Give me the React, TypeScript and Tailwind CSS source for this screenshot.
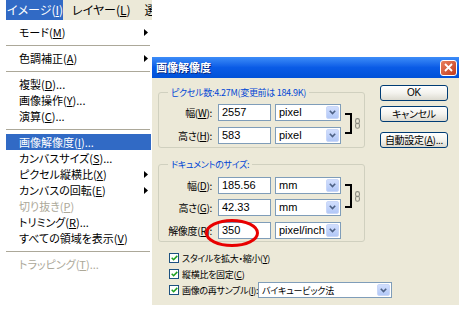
import React from "react";

const JP = "font-['Noto_Sans_CJK_JP',sans-serif] [font-feature-settings:'palt']";
const LAT = "font-['Liberation_Sans','Noto_Sans_CJK_JP',sans-serif]";

function U({ c }: { c: string }) {
  return <span className="underline underline-offset-[1px]">{c}</span>;
}

type Item =
  | { sep: true }
  | { sep?: false; pre: string; key: string; post?: string; arrow?: boolean; disabled?: boolean; hl?: boolean };

const items: Item[] = [
  { pre: "モード", key: "M", arrow: true },
  { sep: true },
  { pre: "色調補正", key: "A", arrow: true },
  { sep: true },
  { pre: "複製", key: "D", post: "..." },
  { pre: "画像操作", key: "Y", post: "..." },
  { pre: "演算", key: "C", post: "..." },
  { sep: true },
  { pre: "画像解像度", key: "I", post: "...", hl: true },
  { pre: "カンバスサイズ", key: "S", post: "..." },
  { pre: "ピクセル縦横比", key: "X", arrow: true },
  { pre: "カンバスの回転", key: "E", arrow: true },
  { pre: "切り抜き", key: "P", disabled: true },
  { pre: "トリミング", key: "R", post: "..." },
  { pre: "すべての領域を表示", key: "V" },
  { sep: true },
  { pre: "トラッピング", key: "T", post: "...", disabled: true },
];

function Arrow() {
  return (
    <svg width="4" height="7" viewBox="0 0 4 7" className="shrink-0">
      <path d="M0 0 L4 3.5 L0 7 Z" fill="#000" />
    </svg>
  );
}

function Menu() {
  return (
    <div className={`w-[152px] shrink-0 flex flex-col ${JP} text-[11px] leading-none`}>
      <div className="h-[20px] flex text-[12px]">
        <div className="w-[6px] bg-white" />
        <div className="flex-1 bg-[#ECE9D8] flex items-center overflow-hidden whitespace-nowrap">
          <div className="h-full w-[57px] bg-[#316AC5] text-white flex items-center pl-[1px]">
            イメージ(<U c="I" />)
          </div>
          <div className="ml-[9px]">
            レイヤー(<U c="L" />)
          </div>
          <div className="ml-[14px]">選択</div>
        </div>
      </div>
      <div className="flex-1 bg-white pt-[4px] flex flex-col">
        {items.map((it, i) =>
          it.sep ? (
            <div key={i} className="h-[10px] ml-[6px] w-[144px] flex items-center">
              <div className="h-px w-full bg-[#ACA899]" />
            </div>
          ) : (
            <div
              key={i}
              className={`h-[16px] ml-[6px] w-[145px] pl-[13px] pr-[3px] flex items-center whitespace-nowrap ${
                it.hl ? "bg-[#316AC5] text-white" : it.disabled ? "text-[#ACA899]" : "text-black"
              }`}
            >
              <span className="flex-1">
                {it.pre}(<U c={it.key} />){it.post ?? ""}
              </span>
              {it.arrow && <Arrow />}
            </div>
          )
        )}
      </div>
    </div>
  );
}

function Chevron() {
  return (
    <svg width="7" height="5" viewBox="0 0 7 5">
      <path d="M0.8 0.8 L3.5 3.6 L6.2 0.8" fill="none" stroke="#4D6185" strokeWidth="1.6" />
    </svg>
  );
}

function Select({ text, w, h = 17, jp }: { text: string; w: number; h?: number; jp?: boolean }) {
  return (
    <div
      className={`border border-[#7F9DB9] bg-white flex items-stretch ${jp ? `${JP} text-[9px] tracking-[-0.2px]` : `${LAT} text-[11px]`}`}
      style={{ width: w, height: h }}
    >
      <div className="flex-1 pl-[3px] flex items-center overflow-hidden whitespace-nowrap">{text}</div>
      <div className="w-[13px] m-px rounded-[2px] bg-gradient-to-b from-[#D1DEFD] to-[#B2C8F7] border border-[#C9D7F8] flex items-center justify-center">
        <Chevron />
      </div>
    </div>
  );
}

function Input({ text }: { text: string }) {
  return (
    <div className={`w-[53px] h-[17px] border border-[#7F9DB9] bg-white pl-[3px] flex items-center ${LAT} text-[11px]`}>
      {text}
    </div>
  );
}

function Row({ label, k, value, unit, ellipse }: { label: string; k: string; value: string; unit: string; ellipse?: boolean }) {
  return (
    <div className="flex items-center h-[17px]">
      <div className="w-[53px] text-right text-[10px] tracking-[-0.3px] whitespace-nowrap">
        {label}(<U c={k} />):
      </div>
      <div className="ml-[6px] relative">
        <Input text={value} />
        {ellipse && (
          <svg className="absolute left-[-14px] top-[-4px]" width="56" height="30" viewBox="0 0 56 30">
            <ellipse cx="28" cy="15" rx="25.5" ry="12.5" fill="none" stroke="#E80000" strokeWidth="3" />
          </svg>
        )}
      </div>
      <div className="ml-[4px]">
        <Select text={unit} w={66} />
      </div>
    </div>
  );
}

function Chain() {
  return (
    <svg width="5" height="11" viewBox="0 0 5 11">
      <rect x="0.6" y="0.6" width="3.8" height="5" rx="1.8" fill="none" stroke="#8A8A80" strokeWidth="1.1" />
      <rect x="0.6" y="5.2" width="3.8" height="5" rx="1.8" fill="none" stroke="#8A8A80" strokeWidth="1.1" />
    </svg>
  );
}

function Bracket({ h }: { h: number }) {
  return (
    <div className="flex items-center ml-[4px]">
      <div className="w-[7px] border-t-2 border-r-2 border-b-2 border-black" style={{ height: h }} />
      <div className="ml-[3px]">
        <Chain />
      </div>
    </div>
  );
}

function Group({ legend, children, h, top }: { legend: string; children: React.ReactNode; h: number; top: string }) {
  return (
    <div className={`relative w-[207px] border border-[#D0D0BF] rounded-[3px] ${top}`} style={{ height: h }}>
      <div className="absolute -top-[7px] left-[9px] px-[3px] bg-[#ECE9D8] text-[#0046D5] text-[9px] tracking-[-0.3px] leading-[13px] whitespace-nowrap">
        {legend}
      </div>
      {children}
    </div>
  );
}

function Check() {
  return (
    <div className="w-[10px] h-[10px] border border-[#1C5180] bg-white flex items-center justify-center shrink-0">
      <svg width="7" height="6" viewBox="0 0 7 6">
        <path d="M0.7 2.8 L2.6 4.7 L6.3 0.9" fill="none" stroke="#21A121" strokeWidth="1.6" />
      </svg>
    </div>
  );
}

function Button({ children, mt }: { children: React.ReactNode; mt: string }) {
  return (
    <div
      className={`w-[68px] h-[16px] ${mt} rounded-[3px] border border-[#003C74] bg-gradient-to-b from-white via-[#F4F3EE] to-[#DCDAD0] flex items-center justify-center text-[10px] tracking-[-0.3px] leading-none whitespace-nowrap`}
    >
      {children}
    </div>
  );
}

function Dialog() {
  return (
    <div className={`w-[307px] shrink-0 mt-[57px] h-[248px] flex flex-col ${JP} leading-none text-black`}>
      <div className="h-[21px] bg-gradient-to-b from-[#3C8CF8] via-[#0A5BE6] to-[#0051D8] flex items-center pl-[4px] pr-[2px]">
        <div className="flex-1 text-white font-bold text-[11px] [text-shadow:1px_1px_0_#0A2A80]">画像解像度</div>
        <div className="w-[17px] h-[16px] rounded-[3px] border border-white bg-gradient-to-br from-[#E9805D] to-[#C2381A] flex items-center justify-center">
          <svg width="9" height="9" viewBox="0 0 9 9">
            <path d="M1 1 L8 8 M8 1 L1 8" stroke="#fff" strokeWidth="1.8" />
          </svg>
        </div>
      </div>
      <div className="flex-1 bg-[#ECE9D8] flex">
        <div className="ml-[6px] w-[207px] shrink-0 flex flex-col">
          <Group legend="ピクセル数:4.27M(変更前は 184.9K)" h={56} top="mt-[14px]">
            <div className="pt-[11px] flex">
              <div className="flex flex-col gap-[6px]">
                <Row label="幅" k="W" value="2557" unit="pixel" />
                <Row label="高さ" k="H" value="583" unit="pixel" />
              </div>
              <div className="mt-[9px]">
                <Bracket h={21} />
              </div>
            </div>
          </Group>
          <Group legend="ドキュメントのサイズ:" h={78} top="mt-[16px]">
            <div className="pt-[12px] flex flex-col">
              <div className="flex">
                <div className="flex flex-col gap-[5px]">
                  <Row label="幅" k="D" value="185.56" unit="mm" />
                  <Row label="高さ" k="G" value="42.33" unit="mm" />
                </div>
                <div className="mt-[7px]">
                  <Bracket h={24} />
                </div>
              </div>
              <div className="mt-[6px]">
                <Row label="解像度" k="R" value="350" unit="pixel/inch" ellipse />
              </div>
            </div>
          </Group>
          <div className="mt-[8px] pl-[11px] flex flex-col text-[9px] tracking-[-0.3px]">
            <div className="h-[16px] flex items-center gap-[3px] whitespace-nowrap">
              <Check />
              <span>
                スタイルを拡大・縮小(<U c="Y" />)
              </span>
            </div>
            <div className="h-[16px] flex items-center gap-[3px] whitespace-nowrap">
              <Check />
              <span>
                縦横比を固定(<U c="C" />)
              </span>
            </div>
            <div className="h-[16px] flex items-center whitespace-nowrap">
              <Check />
              <span className="ml-[3px] w-[76px] shrink-0">
                画像の再サンプル(<U c="I" />):
              </span>
              <div className="shrink-0">
                <Select text="バイキュービック法" w={134} h={16} jp />
              </div>
            </div>
          </div>
        </div>
        <div className="ml-[15px] mt-[7px] flex flex-col">
          <Button mt="mt-0">
            <span className={LAT}>OK</span>
          </Button>
          <Button mt="mt-[5px]">キャンセル</Button>
          <Button mt="mt-[10px]">
            自動設定(<U c="A" />)...
          </Button>
        </div>
      </div>
    </div>
  );
}

export default function App() {
  return (
    <div className="w-[459px] h-[316px] bg-white flex overflow-hidden">
      <Menu />
      <Dialog />
    </div>
  );
}
